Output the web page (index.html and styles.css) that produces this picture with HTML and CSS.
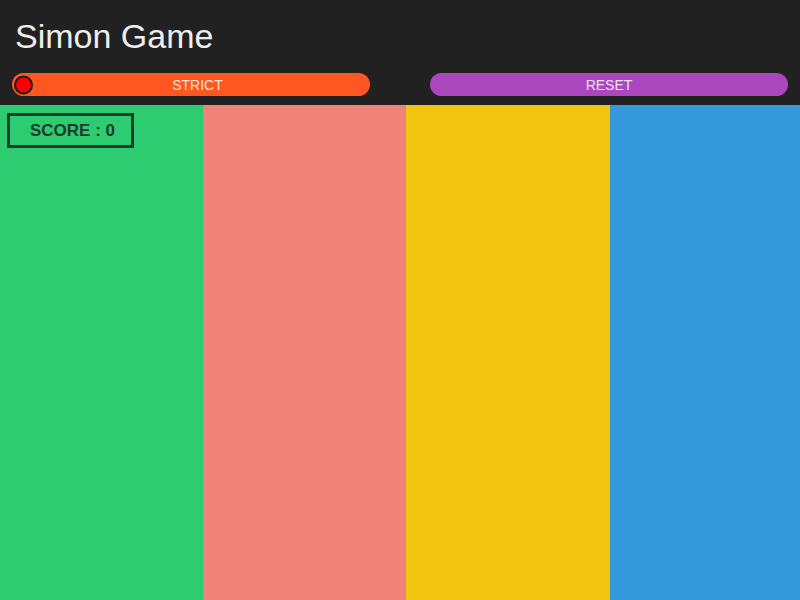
FILE: index.html
```html
<!DOCTYPE html>
<html>
<head>
<meta charset="utf-8">
<link rel="stylesheet" href="styles.css">
</head>
<body>
<header class="top">
  <h1 class="title">Simon Game</h1>
  <div class="controls">
    <button class="btn strict"><span class="led"></span>STRICT</button>
    <button class="btn reset">RESET</button>
  </div>
</header>
<main class="board">
  <div class="pad green"><div class="score">SCORE : 0</div></div>
  <div class="pad salmon"></div>
  <div class="pad yellow"></div>
  <div class="pad blue"></div>
</main>
</body>
</html>
```
FILE: styles.css
```css
html, body {
  margin: 0;
  padding: 0;
  width: 800px;
  height: 600px;
  overflow: hidden;
  font-family: "Liberation Sans", Arial, sans-serif;
}
.top {
  background: #212121;
  height: 105px;
  box-sizing: border-box;
  padding-top: 16px;
}
.title {
  margin: 0 0 0 15px;
  font-family: "Liberation Sans", Arial, sans-serif;
  font-size: 34px;
  font-weight: normal;
  color: #eeeeee;
  line-height: 40px;
}
.controls {
  display: grid;
  grid-template-columns: 358px 358px;
  column-gap: 60px;
  padding: 0 12px;
  margin-top: 17px;
}
.btn {
  position: relative;
  height: 23px;
  border: none;
  border-radius: 12px;
  font-family: "Liberation Sans", Arial, sans-serif;
  font-size: 14px;
  padding: 0;
  cursor: pointer;
}
.strict {
  background: #ff5722;
  color: #fde3dc;
  padding-left: 13px;
}
.reset {
  background: #ab47bc;
  color: #f3e0f5;
}
.led {
  position: absolute;
  left: 2px;
  top: 50%;
  transform: translateY(-50%);
  width: 19px;
  height: 19px;
  box-sizing: border-box;
  border-radius: 50%;
  background: #ff0000;
  border: 2px solid #1a1a1a;
}
.board {
  display: flex;
  height: 495px;
  overflow: hidden;
}
.pad {
  flex: 0 0 25.4%;
  height: 100%;
}
.green { background: #2ecc71; }
.salmon { background: #f08378; }
.yellow { background: #f1c40f; }
.blue { background: #3498db; }
.score {
  margin: 8px 0 0 7px;
  width: 127px;
  height: 35px;
  box-sizing: border-box;
  padding-left: 4px;
  border: 3px solid #1e3b2d;
  color: #1e3b2d;
  font-family: "Liberation Sans", Arial, sans-serif;
  font-weight: bold;
  font-size: 17px;
  display: flex;
  align-items: center;
  justify-content: center;
}
```
